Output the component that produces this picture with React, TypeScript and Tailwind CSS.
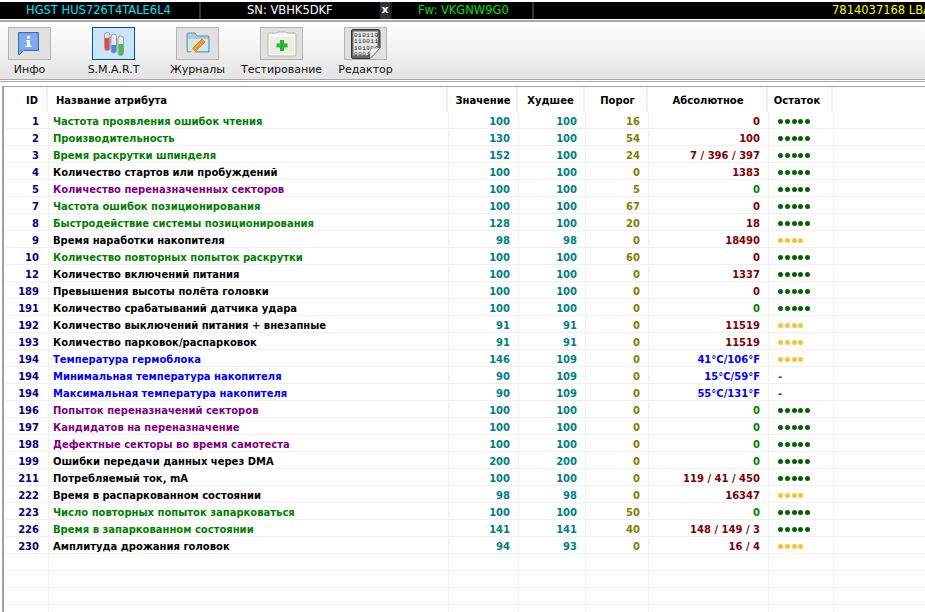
const FONT = "[font-family:'DejaVu_Sans',sans-serif]"

type Row = {
  id: number
  name: string
  color: string
  value: number
  worst: number
  threshold: number
  raw: string
  rawColor: string
  dots: 'good' | 'warn' | 'none'
}

const G = 'text-[#008000]'
const P = 'text-[#800080]'
const B = 'text-[#0000ff]'
const K = 'text-[#000000]'
const M = 'text-[#800000]'
const N = 'text-[#008000]'

const ROWS: Row[] = [
  { id: 1, name: 'Частота проявления ошибок чтения', color: G, value: 100, worst: 100, threshold: 16, raw: '0', rawColor: M, dots: 'good' },
  { id: 2, name: 'Производительность', color: G, value: 130, worst: 100, threshold: 54, raw: '100', rawColor: M, dots: 'good' },
  { id: 3, name: 'Время раскрутки шпинделя', color: G, value: 152, worst: 100, threshold: 24, raw: '7 / 396 / 397', rawColor: M, dots: 'good' },
  { id: 4, name: 'Количество стартов или пробуждений', color: K, value: 100, worst: 100, threshold: 0, raw: '1383', rawColor: M, dots: 'good' },
  { id: 5, name: 'Количество переназначенных секторов', color: P, value: 100, worst: 100, threshold: 5, raw: '0', rawColor: N, dots: 'good' },
  { id: 7, name: 'Частота ошибок позиционирования', color: G, value: 100, worst: 100, threshold: 67, raw: '0', rawColor: M, dots: 'good' },
  { id: 8, name: 'Быстродействие системы позиционирования', color: G, value: 128, worst: 100, threshold: 20, raw: '18', rawColor: M, dots: 'good' },
  { id: 9, name: 'Время наработки накопителя', color: K, value: 98, worst: 98, threshold: 0, raw: '18490', rawColor: M, dots: 'warn' },
  { id: 10, name: 'Количество повторных попыток раскрутки', color: G, value: 100, worst: 100, threshold: 60, raw: '0', rawColor: M, dots: 'good' },
  { id: 12, name: 'Количество включений питания', color: K, value: 100, worst: 100, threshold: 0, raw: '1337', rawColor: M, dots: 'good' },
  { id: 189, name: 'Превышения высоты полёта головки', color: K, value: 100, worst: 100, threshold: 0, raw: '0', rawColor: M, dots: 'good' },
  { id: 191, name: 'Количество срабатываний датчика удара', color: K, value: 100, worst: 100, threshold: 0, raw: '0', rawColor: N, dots: 'good' },
  { id: 192, name: 'Количество выключений питания + внезапные', color: K, value: 91, worst: 91, threshold: 0, raw: '11519', rawColor: M, dots: 'warn' },
  { id: 193, name: 'Количество парковок/распарковок', color: K, value: 91, worst: 91, threshold: 0, raw: '11519', rawColor: M, dots: 'warn' },
  { id: 194, name: 'Температура гермоблока', color: B, value: 146, worst: 109, threshold: 0, raw: '41°C/106°F', rawColor: B, dots: 'warn' },
  { id: 194, name: 'Минимальная температура накопителя', color: B, value: 90, worst: 109, threshold: 0, raw: '15°C/59°F', rawColor: B, dots: 'none' },
  { id: 194, name: 'Максимальная температура накопителя', color: B, value: 90, worst: 109, threshold: 0, raw: '55°C/131°F', rawColor: B, dots: 'none' },
  { id: 196, name: 'Попыток переназначений секторов', color: P, value: 100, worst: 100, threshold: 0, raw: '0', rawColor: N, dots: 'good' },
  { id: 197, name: 'Кандидатов на переназначение', color: P, value: 100, worst: 100, threshold: 0, raw: '0', rawColor: N, dots: 'good' },
  { id: 198, name: 'Дефектные секторы во время самотеста', color: P, value: 100, worst: 100, threshold: 0, raw: '0', rawColor: N, dots: 'good' },
  { id: 199, name: 'Ошибки передачи данных через DMA', color: K, value: 200, worst: 200, threshold: 0, raw: '0', rawColor: N, dots: 'good' },
  { id: 211, name: 'Потребляемый ток, mA', color: K, value: 100, worst: 100, threshold: 0, raw: '119 / 41 / 450', rawColor: M, dots: 'good' },
  { id: 222, name: 'Время в распаркованном состоянии', color: K, value: 98, worst: 98, threshold: 0, raw: '16347', rawColor: M, dots: 'warn' },
  { id: 223, name: 'Число повторных попыток запарковаться', color: G, value: 100, worst: 100, threshold: 50, raw: '0', rawColor: N, dots: 'good' },
  { id: 226, name: 'Время в запаркованном состоянии', color: G, value: 141, worst: 141, threshold: 40, raw: '148 / 149 / 3', rawColor: M, dots: 'good' },
  { id: 230, name: 'Амплитуда дрожания головок', color: K, value: 94, worst: 93, threshold: 0, raw: '16 / 4', rawColor: M, dots: 'warn' },
]

function InfoIcon() {
  return (
    <svg width="21" height="23" viewBox="0 0 21 23" className="mr-[2px]">
      <path d="M.5.5h20v18H5.500l-4 4h-1z" fill="#6f9fe6" stroke="#4472a8" />
      <rect x="2" y="2" width="17" height="15" fill="#7fabf0" />
      <rect x="9" y="4" width="3" height="2.500" fill="#fff" />
      <path d="M8 8h4v5.500h1.500V15h-6v-1.500H9V9.500H8z" fill="#fff" />
    </svg>
  )
}

function TubesIcon() {
  return (
    <svg width="20" height="24" viewBox="0 0 20 24">
      <rect x="0.500" y="0.500" width="5.500" height="18" rx="2.500" fill="#e8e8ee" stroke="#9a9aa6" />
      <path d="M1 6h4.500v10a2.250 2.250 0 0 1-4.500 0z" fill="#e2474c" />
      <rect x="7" y="2" width="5.500" height="19" rx="2.500" fill="#e4ecf8" stroke="#9a9aa6" />
      <path d="M7.500 13H12v5.500a2.250 2.250 0 0 1-4.500 0z" fill="#3a8ee0" />
      <rect x="14" y="4" width="5.500" height="19.500" rx="2.500" fill="#e6f2e6" stroke="#9a9aa6" />
      <path d="M14.500 12H19v9a2.250 2.250 0 0 1-4.500 0z" fill="#4cbb4c" />
    </svg>
  )
}

function FolderIcon() {
  return (
    <svg width="24" height="23" viewBox="0 0 24 23">
      <path d="M1 4V2a1 1 0 0 1 1-1h7l2 3h11a1 1 0 0 1 1 1v15H2a1 1 0 0 1-1-1z" fill="#a9cfd8" stroke="#5a98a8" />
      <path d="M2 7h20v12H2z" fill="#d3e6ea" />
      <path d="M6 20l1-4 9-9 3 3-9 9z" fill="#f5962a" stroke="#d97a14" strokeWidth="0.700" />
      <path d="M4.500 22l2-5 3 3z" fill="#fbe7c8" />
    </svg>
  )
}

function KitIcon() {
  return (
    <svg width="30" height="26" viewBox="0 0 30 26">
      <path d="M2 2h8l1-1h8l1 1h8a1 1 0 0 1 1 1v21a1 1 0 0 1-1 1H2a1 1 0 0 1-1-1V3a1 1 0 0 1 1-1z" fill="#f6f6f4" stroke="#b4b4b0" />
      <path d="M3 6h24v17H3z" fill="#ebebe7" />
      <path d="M13 9h4v3.500h3.500v4H17V20h-4v-3.500H9.500v-4H13z" fill="#2bb52b" />
    </svg>
  )
}

function BinaryIcon() {
  const mono = "'Liberation Mono', monospace"
  return (
    <svg width="30" height="30" viewBox="0 0 30 30">
      <path d="M2 .5h25a2 2 0 0 1 2 2V19l-10 10.500H2a1.500 1.500 0 0 1-1.500-1.500V2A1.500 1.500 0 0 1 2 .5z" fill="#666" stroke="#333" />
      <path d="M2.500 2.500h24v18h-7l-2 6H2.500z" fill="#e6e6e6" />
      <text x="3" y="8" fontSize="6" textLength="24" fontFamily={mono} fill="#222">010110</text>
      <text x="3" y="14.300" fontSize="6" textLength="24" fontFamily={mono} fill="#222">110011</text>
      <text x="3" y="20.600" fontSize="6" textLength="24" fontFamily={mono} fill="#222">101000</text>
      <text x="3" y="26.900" fontSize="6" textLength="16" fontFamily={mono} fill="#222">0001</text>
      <path d="M19 29.500 29 19h-7a3 3 0 0 0-3 3z" fill="#f2f2f0" stroke="#888" strokeWidth="0.700" />
    </svg>
  )
}

function ToolButton({ label, active, children }: { label: string; active?: boolean; children: React.ReactNode }) {
  return (
    <div className="flex w-[43px] flex-col items-center">
      <div
        className={
          active
            ? 'flex h-[33px] w-[43px] items-center justify-center border border-[#005499] bg-[#cce4f7]'
            : 'flex h-[33px] w-[43px] items-center justify-center border border-[#b4b4b4] bg-[#e0e0e0]'
        }
      >
        {children}
      </div>
      <span className={`mt-[2px] whitespace-nowrap text-[11px] leading-[16px] text-[#111] ${FONT}`}>{label}</span>
    </div>
  )
}

function Dots({ kind }: { kind: Row['dots'] }) {
  if (kind === 'none') return <span className="ml-[9px] text-[#006400]">-</span>
  const count = kind === 'good' ? 5 : 4
  const color = kind === 'good' ? 'bg-[#006400]' : 'bg-[#ffc030]'
  return (
    <span className="ml-[9px] flex gap-[1.800px]">
      {Array.from({ length: count }).map((_, i) => (
        <span key={i} className={`h-[5px] w-[5px] rounded-full ${color}`} />
      ))}
    </span>
  )
}

const cellLine = 'flex shrink-0 items-center border-r border-[#f0f0f0] pt-[3px]'

function TableRow({ row }: { row?: Row }) {
  return (
    <div className="flex h-[17px] border-b border-[#f0f0f0] text-[10px] font-bold leading-[16px]">
      <div className={`${cellLine} w-[45px] justify-end pr-[9px] text-[#000080]`}>{row?.id}</div>
      <div className={`${cellLine} w-[400px] whitespace-nowrap pl-[4px] ${row?.color ?? ''}`}>{row?.name}</div>
      <div className={`${cellLine} w-[70px] justify-end pr-[8px] text-[#008080]`}>{row?.value}</div>
      <div className={`${cellLine} w-[67px] justify-end pr-[8px] text-[#008080]`}>{row?.worst}</div>
      <div className={`${cellLine} w-[63px] justify-end pr-[8px] text-[#808000]`}>{row?.threshold}</div>
      <div className={`${cellLine} w-[120px] justify-end pr-[8px] ${row?.rawColor ?? ''}`}>{row?.raw}</div>
      <div className={`${cellLine} w-[65px]`}>{row && <Dots kind={row.dots} />}</div>
    </div>
  )
}

export default function App() {
  return (
    <div className={`flex h-[612px] w-[925px] flex-col overflow-hidden bg-white ${FONT}`}>
      <div className="mt-[2px] flex h-[17px] shrink-0 items-center bg-black text-[11.500px] whitespace-nowrap">
        <div className="flex h-full w-[201px] shrink-0 items-center border-r-[2px] border-[#333] pl-[26px] text-[#00e5ff]">HGST HUS726T4TALE6L4</div>
        <div className="flex h-full w-[179px] shrink-0 items-center pl-[46px] text-white">SN: VBHK5DKF</div>
        <div className="flex h-full w-[12px] shrink-0 items-center justify-center border-r-[2px] border-[#222] bg-[#333] text-[11px] font-bold text-white">x</div>
        <div className="flex h-full w-[142px] shrink-0 items-center border-r-[2px] border-[#333] pl-[26px] text-[#00e000]">Fw: VKGNW9G0</div>
        <div className="flex-1 pl-[298px] text-[#ffff00]">7814037168 LBA</div>
      </div>

      <div className="mt-[1px] flex h-[59px] shrink-0 gap-[41px] border-t-[2px] border-[#a8a8a8] bg-gradient-to-b from-white to-[#e4e4e4] pt-[5px] pl-[8px]">
        <ToolButton label="Инфо"><InfoIcon /></ToolButton>
        <ToolButton label="S.M.A.R.T" active><TubesIcon /></ToolButton>
        <ToolButton label="Журналы"><FolderIcon /></ToolButton>
        <ToolButton label="Тестирование"><KitIcon /></ToolButton>
        <ToolButton label="Редактор"><BinaryIcon /></ToolButton>
      </div>

      <div className="mb-[4px] h-[3px] shrink-0 border-y border-[#a8a8a8] bg-white" />

      <div className="ml-[2px] flex-1 border-t border-l-[2px] border-[#a0a0a0] bg-white">
        <div className="flex h-[25px] pt-[0px] text-[10px] leading-[16px] font-bold text-black">
          <div className="flex w-[44px] items-center justify-end border-r-2 border-[#f0f0f0] pt-[2px] pr-[8px]">ID</div>
          <div className="flex w-[400px] items-center border-r-2 border-[#f0f0f0] pt-[2px] pl-[8px]">Название атрибута</div>
          <div className="flex w-[70px] items-center justify-center border-r-2 border-[#f0f0f0] pt-[2px] pl-[2px]">Значение</div>
          <div className="flex w-[67px] items-center justify-center border-r-2 border-[#f0f0f0] pt-[2px]">Худшее</div>
          <div className="flex w-[63px] items-center justify-center border-r-2 border-[#f0f0f0] pt-[2px] pl-[4px]">Порог</div>
          <div className="flex w-[120px] items-center justify-center border-r-2 border-[#f0f0f0] pt-[2px] pl-[2px]">Абсолютное</div>
          <div className="flex w-[65px] items-center justify-center border-r-2 border-[#f0f0f0] pt-[2px] pr-[5px]">Остаток</div>
        </div>
        {ROWS.map((row, i) => (
          <TableRow key={i} row={row} />
        ))}
        {Array.from({ length: 5 }).map((_, i) => (
          <TableRow key={`empty-${i}`} />
        ))}
      </div>
    </div>
  )
}
